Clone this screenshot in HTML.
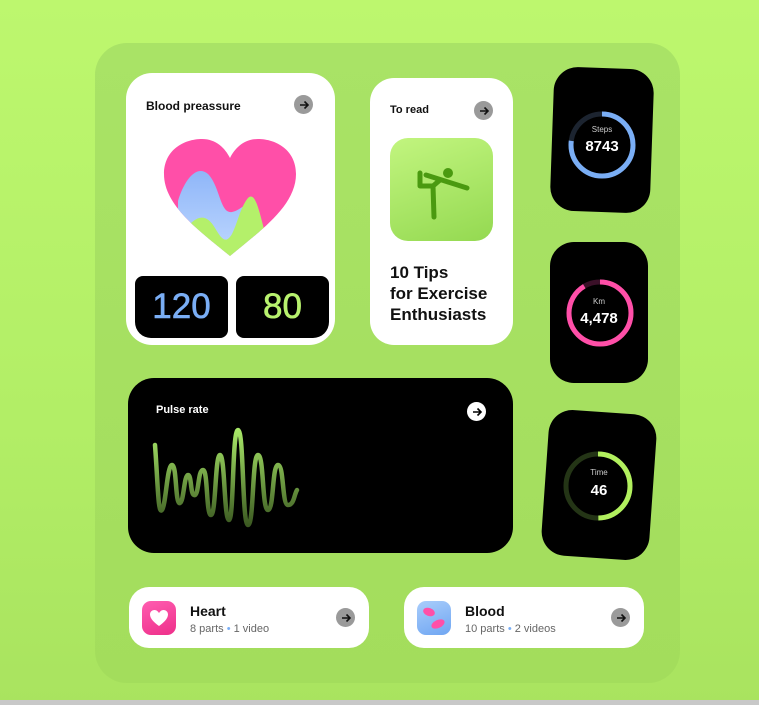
<!DOCTYPE html>
<html><head><style>
*{margin:0;padding:0;box-sizing:border-box}
body{width:759px;height:705px;overflow:hidden;background:linear-gradient(180deg,#bdf76e,#b2ee66 60%,#a9e35f);font-family:"Liberation Sans",sans-serif;position:relative}
.a{position:absolute}
.panel{left:95px;top:43px;width:585px;height:640px;border-radius:32px;background:linear-gradient(180deg,#a9e366,#a3dd5c)}
.card{background:#fff;border-radius:26px}
.t{font-weight:bold;font-size:12px;color:#111}
.arr{width:19px;height:19px;border-radius:50%;background:#9a9a9a;display:flex;align-items:center;justify-content:center}
.watch{background:#000;border-radius:24px}
.num{color:#fff;font-weight:bold;font-size:15px;text-align:center;width:100%}
.lbl{color:#ccc;font-size:8px;text-align:center;width:100%}
</style></head><body>
<div class="a panel"></div>

<div class="a card" style="left:126px;top:73px;width:209px;height:272px"></div>
<div class="a t" style="left:146px;top:99px">Blood preassure</div>
<div class="a arr" style="left:294px;top:95px"><svg width="12" height="12" viewBox="0 0 12 12"><path d="M2 6h8M6.5 2.5L10 6l-3.5 3.5" stroke="#111" stroke-width="1.6" fill="none"/></svg></div>
<svg class="a" style="left:160px;top:136px" width="140" height="122" viewBox="0 0 140 122">
<defs><clipPath id="h"><path d="M70 120C40 95 4 70 4 38C4 14 24 3 42 3C56 3 65 12 70 22C75 12 84 3 98 3C116 3 136 14 136 38C136 70 100 95 70 120Z"/></clipPath>
<linearGradient id="bl" x1="0" y1="0" x2="0" y2="1"><stop offset="0" stop-color="#8fb6f8"/><stop offset="1" stop-color="#bfd8ff"/></linearGradient></defs>
<path d="M70 120C40 95 4 70 4 38C4 14 24 3 42 3C56 3 65 12 70 22C75 12 84 3 98 3C116 3 136 14 136 38C136 70 100 95 70 120Z" fill="#ff4fa8"/>
<g clip-path="url(#h)">
<path d="M18 120L18 65C24 45 36 28 48 38C60 50 60 78 72 76C82 74 86 64 95 70L110 120Z" fill="url(#bl)"/>
<path d="M30 120L30 88C40 78 48 80 55 92C62 104 66 108 72 98C78 86 80 72 88 62C96 54 100 80 106 100L110 120Z" fill="#b4f06a"/>
</g></svg>
<div class="a" style="left:135px;top:276px;width:93px;height:62px;background:#000;border-radius:8px 8px 8px 16px;color:#7aaef5;font-size:35px;text-align:center;line-height:62px;-webkit-text-stroke:0.6px #7aaef5">120</div>
<div class="a" style="left:236px;top:276px;width:93px;height:62px;background:#000;border-radius:8px 8px 16px 8px;color:#b8f26e;font-size:35px;text-align:center;line-height:62px;-webkit-text-stroke:0.6px #b8f26e">80</div>

<div class="a card" style="left:370px;top:78px;width:143px;height:267px;border-radius:24px"></div>
<div class="a t" style="left:390px;top:104px;font-size:11px">To read</div>
<div class="a arr" style="left:474px;top:101px"><svg width="12" height="12" viewBox="0 0 12 12"><path d="M2 6h8M6.5 2.5L10 6l-3.5 3.5" stroke="#111" stroke-width="1.6" fill="none"/></svg></div>
<div class="a" style="left:390px;top:138px;width:103px;height:103px;border-radius:18px;background:linear-gradient(160deg,#c2f57f,#94d951)"></div>
<svg class="a" style="left:390px;top:138px" width="103" height="103" viewBox="0 0 103 103">
<circle cx="58" cy="35" r="5" fill="#4a9a10"/>
<path d="M30 35L30 48L43 48M36 37L77 50M43 48L44 79M43 48L50 42" stroke="#4a9a10" stroke-width="5" fill="none" stroke-linecap="round" stroke-linejoin="round"/></svg>
<div class="a" style="left:390px;top:262px;font-weight:bold;font-size:17px;line-height:21px;color:#111">10 Tips<br>for Exercise<br>Enthusiasts</div>

<div class="a watch" style="left:552px;top:68px;width:100px;height:144px;transform:rotate(2deg)"></div>
<svg class="a" style="left:567px;top:110px" width="70" height="70" viewBox="0 0 70 70"><circle cx="35" cy="35" r="31" stroke="#1c2430" stroke-width="5" fill="none"/><circle cx="35" cy="35" r="31" stroke="#7aaef5" stroke-width="5" fill="none" stroke-dasharray="150 195" transform="rotate(-90 35 35)"/></svg>
<div class="a lbl" style="left:552px;top:125px;width:100px">Steps</div>
<div class="a num" style="left:552px;top:138px;width:100px">8743</div>

<div class="a watch" style="left:550px;top:242px;width:98px;height:141px"></div>
<svg class="a" style="left:565px;top:278px" width="70" height="70" viewBox="0 0 70 70"><circle cx="35" cy="35" r="31" stroke="#3a1028" stroke-width="5" fill="none"/><circle cx="35" cy="35" r="31" stroke="#ff4fa8" stroke-width="5" fill="none" stroke-dasharray="178 195" transform="rotate(-90 35 35)"/></svg>
<div class="a lbl" style="left:550px;top:297px;width:98px">Km</div>
<div class="a num" style="left:550px;top:310px;width:98px">4,478</div>

<div class="a watch" style="left:545px;top:412px;width:108px;height:146px;transform:rotate(4deg)"></div>
<svg class="a" style="left:562px;top:450px" width="72" height="72" viewBox="0 0 72 72"><circle cx="36" cy="36" r="32" stroke="#243516" stroke-width="5" fill="none"/><circle cx="36" cy="36" r="32" stroke="#b2f05e" stroke-width="5" fill="none" stroke-dasharray="100 201" transform="rotate(-90 36 36)"/></svg>
<div class="a lbl" style="left:545px;top:468px;width:108px">Time</div>
<div class="a num" style="left:545px;top:482px;width:108px">46</div>

<div class="a" style="left:128px;top:378px;width:385px;height:175px;background:#000;border-radius:26px"></div>
<div class="a t" style="left:156px;top:404px;color:#fff;font-size:11px">Pulse rate</div>
<div class="a arr" style="left:467px;top:402px;background:#fff"><svg width="12" height="12" viewBox="0 0 12 12"><path d="M2 6h8M6.5 2.5L10 6l-3.5 3.5" stroke="#000" stroke-width="1.6" fill="none"/></svg></div>
<svg class="a" style="left:150px;top:425px" width="165" height="105" viewBox="0 0 165 105">
<defs><linearGradient id="pg" x1="0" y1="0" x2="0" y2="1"><stop offset="0" stop-color="#a8e868"/><stop offset="1" stop-color="#3c5a22"/></linearGradient></defs>
<path d="M5 20C8 60 8 90 12 85C16 80 17 40 22 40C27 40 25 80 30 78C34 76 34 50 38 50C42 50 40 72 45 70C49 68 48 45 53 45C58 45 56 90 61 90C66 90 65 30 70 30C75 30 74 95 79 95C84 95 82 5 88 5C94 5 92 100 98 100C104 100 102 30 108 30C114 30 112 85 118 85C124 85 122 40 128 40C134 40 132 80 138 80C144 80 144 70 147 65" stroke="url(#pg)" stroke-width="4.5" fill="none" stroke-linecap="round"/></svg>

<div class="a card" style="left:129px;top:587px;width:240px;height:61px;border-radius:20px"></div>
<div class="a" style="left:142px;top:601px;width:34px;height:34px;border-radius:9px;background:linear-gradient(160deg,#ff5db0,#ee2f8a)"></div>
<svg class="a" style="left:149px;top:609px" width="20" height="18" viewBox="0 0 20 18"><path d="M10 17C6 14 1 10 1 5.5C1 2.5 3.5 1 5.5 1C7.5 1 9 2.5 10 4C11 2.5 12.5 1 14.5 1C16.5 1 19 2.5 19 5.5C19 10 14 14 10 17Z" fill="#fff"/></svg>
<div class="a" style="left:190px;top:603px;font-size:14px;font-weight:bold;color:#111">Heart</div>
<div class="a" style="left:190px;top:623px;font-size:11px;color:#666">8 parts <span style="color:#7aaef5">•</span> 1 video</div>
<div class="a arr" style="left:336px;top:608px"><svg width="12" height="12" viewBox="0 0 12 12"><path d="M2 6h8M6.5 2.5L10 6l-3.5 3.5" stroke="#111" stroke-width="1.6" fill="none"/></svg></div>

<div class="a card" style="left:404px;top:587px;width:240px;height:61px;border-radius:20px"></div>
<div class="a" style="left:417px;top:601px;width:34px;height:34px;border-radius:9px;background:linear-gradient(160deg,#a9cdfb,#6fa6f2)"></div>
<svg class="a" style="left:417px;top:601px" width="34" height="34" viewBox="0 0 34 34"><ellipse cx="12" cy="11" rx="6" ry="4" fill="#ff4fa8" transform="rotate(20 12 11)"/><ellipse cx="21" cy="23" rx="7" ry="4" fill="#ff4fa8" transform="rotate(-25 21 23)"/></svg>
<div class="a" style="left:465px;top:603px;font-size:14px;font-weight:bold;color:#111">Blood</div>
<div class="a" style="left:465px;top:623px;font-size:11px;color:#666">10 parts <span style="color:#7aaef5">•</span> 2 videos</div>
<div class="a arr" style="left:611px;top:608px"><svg width="12" height="12" viewBox="0 0 12 12"><path d="M2 6h8M6.5 2.5L10 6l-3.5 3.5" stroke="#111" stroke-width="1.6" fill="none"/></svg></div>

<div class="a" style="left:0;top:700px;width:759px;height:5px;background:#c8c8c8"></div>
</body></html>
